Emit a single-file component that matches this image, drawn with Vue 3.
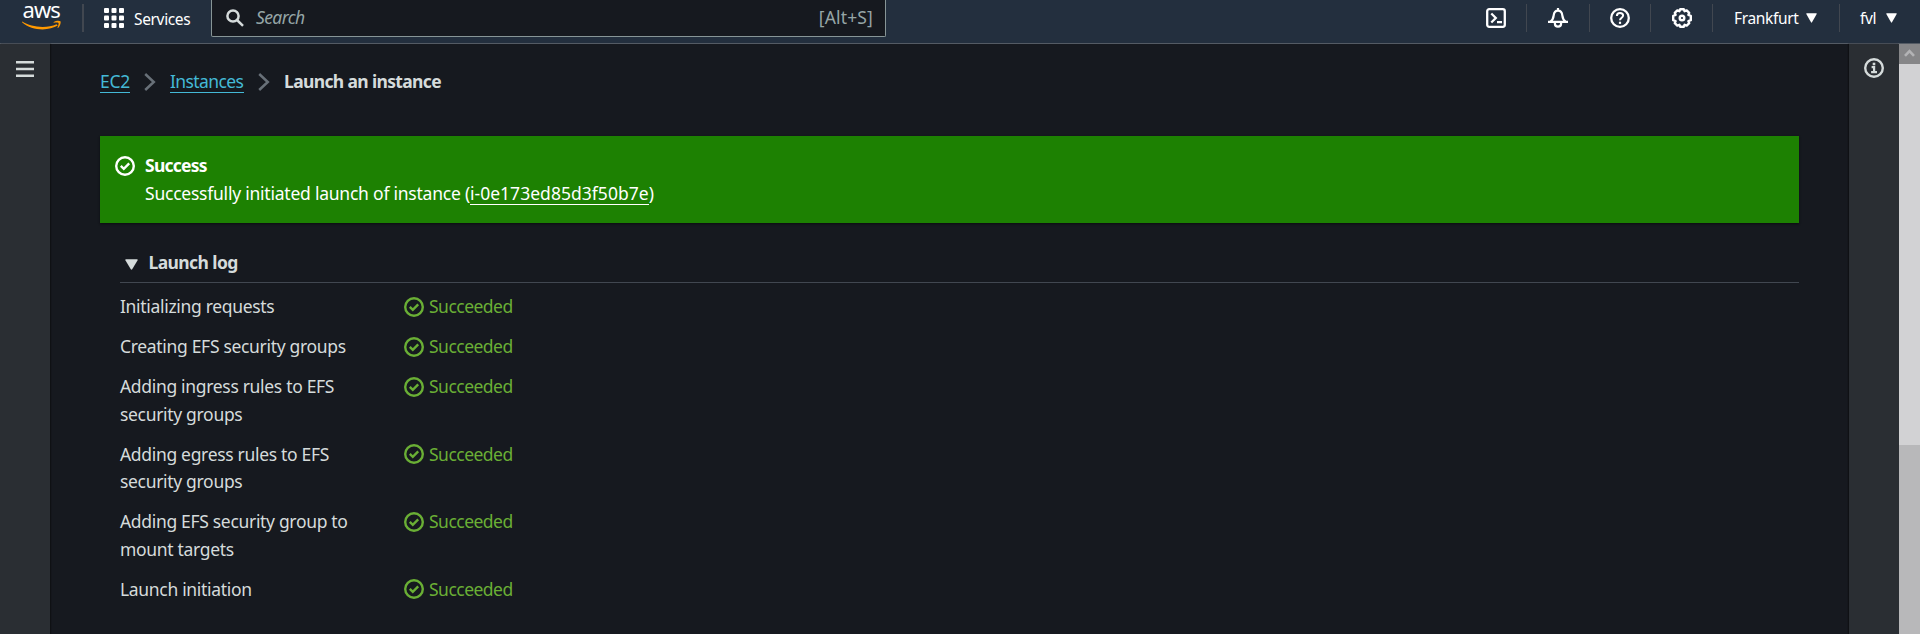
<script setup>
const tasks = [
  ['Initializing requests'],
  ['Creating EFS security groups'],
  ['Adding ingress rules to EFS', 'security groups'],
  ['Adding egress rules to EFS', 'security groups'],
  ['Adding EFS security group to', 'mount targets'],
  ['Launch initiation'],
]
const dots = [0, 1, 2, 3, 4, 5, 6, 7, 8]
</script>

<template>
  <div class="console">
    <header class="topbar">
      <div class="logo">
        <span class="logo-text">aws</span>
        <svg class="smile" width="40" height="11" viewBox="0 0 40 11">
          <path d="M.3 1.600C9 7.500 25 8.800 34.500 4.200l1.300 1.400C27 11 10 11.300 0 2.200z" fill="#f90" />
          <path d="M31.500 2.200c2.500-1.600 6-1.700 7-.9.600 1.200-.2 4.600-2.400 6.700l-.7-.3c.9-2 1.500-4 1.100-4.700-.6-.6-2.700-.5-4.800-.2z" fill="#f90" />
        </svg>
      </div>
      <i class="divider first"></i>
      <div class="services">
        <svg width="20" height="20" viewBox="0 0 20 20" fill="#fff">
          <rect v-for="d in dots" :key="d" :x="(d % 3) * 7.5" :y="Math.floor(d / 3) * 7.5" width="5" height="5" rx="1" />
        </svg>
        <span>Services</span>
      </div>
      <div class="search">
        <svg width="18" height="18" viewBox="0 0 18 18" fill="none" stroke="#d5dbdb" stroke-width="2.500">
          <circle cx="7" cy="7" r="5.600" /><path d="M11 11l6 5.800" />
        </svg>
        <em>Search</em>
        <span class="shortcut">[Alt+S]</span>
      </div>
      <nav class="tools">
        <span class="cell c1">
          <svg width="20" height="20" viewBox="0 0 20 20" fill="none" stroke="#fff" stroke-width="2.300">
            <rect x="1.200" y="1.200" width="17.600" height="17.600" rx="2" />
            <path d="M5.300 5.500l4.500 4.500-4.500 4.500M11 14.100h5" />
          </svg>
        </span>
        <span class="cell c2">
          <svg width="20" height="20" viewBox="0 0 20 20" fill="none" stroke="#fff" stroke-width="2.200">
            <path d="M10 0v2.500M2.200 13.800c2.400-1.800 3.200-3.600 3.500-6.500C6 4.300 7.500 2.600 10 2.600s4 1.700 4.300 4.700c.3 2.900 1.100 4.700 3.500 6.500M0 13.900h20" />
            <path d="M6.900 14v1.500c0 2 1.200 3.200 3.100 3.200s3.100-1.200 3.100-3.200V14" />
          </svg>
        </span>
        <span class="cell c3">
          <svg width="20" height="20" viewBox="0 0 20 20" fill="none" stroke="#fff" stroke-width="2.300">
            <circle cx="10" cy="10" r="8.800" />
            <path d="M6.900 8c0-2 1.300-3 3.100-3s3.100 1.100 3.100 2.600c0 2.200-3.100 2.200-3.100 4.700" stroke-width="2" />
            <path d="M10 13.700v2.200" stroke-width="2.200" />
          </svg>
        </span>
        <span class="cell c4">
          <svg width="20" height="20" viewBox="0 0 20 20" fill="none" stroke="#fff" stroke-width="2.400" stroke-linejoin="round">
            <path d="M8.200 1.200h3.600l.8 2 2.100-.8 2.500 2.500-.8 2 2.400.9v4.400l-2.400.9.800 2-2.500 2.500-2.100-.8-.8 2H8.200l-.8-2-2.100.8-2.500-2.500.8-2-2.400-.9V7.800l2.400-.9-.8-2 2.500-2.500 2.100.8z" />
            <circle cx="10" cy="10" r="2.300" />
          </svg>
        </span>
        <span class="cell c5">
          <span>Frankfurt</span>
          <svg width="11" height="10" viewBox="0 0 11 10"><path d="M.8.300h9.400q.8 0 .5.700L6 9.300q-.5.700-1 0L.3 1Q0 .300.800.300z" fill="#fff" /></svg>
        </span>
        <span class="cell c6">
          <span>fvl</span>
          <svg width="11" height="10" viewBox="0 0 11 10"><path d="M.8.300h9.400q.8 0 .5.700L6 9.300q-.5.700-1 0L.3 1Q0 .300.800.300z" fill="#fff" /></svg>
        </span>
      </nav>
    </header>

    <div class="body">
      <aside class="rail left">
        <svg width="18" height="16" viewBox="0 0 18 16" fill="#d5dbdb">
          <path d="M0 0h18v2.500H0zM0 6.700h18v2.500H0zM0 13.400h18v2.500H0z" />
        </svg>
      </aside>

      <main>
        <nav class="crumbs">
          <a class="link ec2">EC2</a>
          <svg width="12" height="18" viewBox="0 0 12 18"><path d="M1.200 1l8.600 8-8.600 8" fill="none" stroke="#687078" stroke-width="2.500" /></svg>
          <a class="link inst">Instances</a>
          <svg width="12" height="18" viewBox="0 0 12 18"><path d="M1.200 1l8.600 8-8.600 8" fill="none" stroke="#687078" stroke-width="2.500" /></svg>
          <b>Launch an instance</b>
        </nav>

        <section class="flash">
          <svg class="check" width="20" height="20" viewBox="0 0 20 20" fill="none" stroke="#fff" stroke-width="2.400">
            <circle cx="10" cy="10" r="8.800" /><path d="M5.800 9.800l3 3 5.400-5.400" />
          </svg>
          <div>
            <div class="flash-title">Success</div>
            <div class="flash-text">Successfully initiated launch of instance (<a>i-0e173ed85d3f50b7e</a>)</div>
          </div>
        </section>

        <section class="log">
          <h2>
            <svg width="13" height="11" viewBox="0 0 13 11"><path d="M.9.300h11.200q1 0 .5.900L7.200 10.200q-.7.900-1.400 0L.4 1.200Q-.1.300.900.300z" fill="#d5dbdb" /></svg>
            <span>Launch log</span>
          </h2>
          <ul>
            <li v-for="(t, i) in tasks" :key="i">
              <div class="name"><div v-for="line in t" :key="line">{{ line }}</div></div>
              <div class="status">
                <svg width="20" height="20" viewBox="0 0 20 20" fill="none" stroke="#6aaf35" stroke-width="2.400">
                  <circle cx="10" cy="10" r="8.800" /><path d="M5.800 9.800l3 3 5.400-5.400" />
                </svg>
                <span>Succeeded</span>
              </div>
            </li>
          </ul>
        </section>
      </main>

      <aside class="rail right">
        <svg width="20" height="20" viewBox="0 0 20 20" fill="none" stroke="#d5dbdb">
          <circle cx="10" cy="10" r="8.800" stroke-width="2.400" />
          <path d="M10 4.700v2.600" stroke-width="2.600" />
          <path d="M7.600 9.100h2.500v5M7.100 14.200h5.900" stroke-width="2.200" />
        </svg>
      </aside>
      <div class="scrollbar">
        <div class="up"><svg width="11" height="8" viewBox="0 0 11 8"><path d="M1 6.800l4.500-4.700L10 6.800" fill="none" stroke="#b3b3b5" stroke-width="2.600" /></svg></div>
        <div class="thumb"></div>
      </div>
    </div>
  </div>
</template>

<style>
body { margin: 0; overflow: hidden; background: #16191f; }
</style>

<style scoped>
.console { width: 1920px; height: 634px; display: flex; flex-direction: column; overflow: hidden; background: #16191f; color: #d5dbdb; font-family: "Noto Sans", "Open Sans", sans-serif; font-size: 17.5px; line-height: 27.5px; letter-spacing: -0.6px; }
svg { display: block; flex: none; }
.topbar { box-sizing: border-box; height: 44px; flex: none; display: flex; background: #232f3e; border-bottom: 1px solid #545b64; color: #fff; font-size: 15.5px; letter-spacing: -0.35px; }
.logo { width: 82px; box-sizing: border-box; padding-left: 22px; }
.logo-text { display: block; height: 20px; line-height: 19px; font-size: 22px; letter-spacing: -0.9px; padding-left: 0.5px; }
.divider { width: 1px; height: 28px; margin-top: 4px; background: #414750; border-right: 1px solid #414750; }
.services { width: 127px; display: flex; align-items: flex-start; gap: 10px; padding-left: 20px; box-sizing: border-box; padding-top: 8px; }
.services span { line-height: 22px; }
.search { box-sizing: border-box; width: 675px; height: 37px; background: #16191f; border: 1px solid #879596; border-top: 0; border-radius: 0 0 2px 2px; display: flex; align-items: center; padding: 0 12px 0 14px; color: #95a5a6; font-size: 17.5px; letter-spacing: -0.6px; }
.search em { margin-left: 12px; }
.shortcut { margin-left: auto; letter-spacing: 0.15px; }
.tools { margin-left: auto; display: flex; height: 28px; margin-top: 4px; }
.cell { box-sizing: border-box; display: flex; align-items: center; border-left: 1px solid #414750; line-height: 28px; }
.cell svg { margin-top: -1px; }
.c1 { border: 0; width: 40px; }
.c2 { width: 63px; padding-left: 21px; }
.c3 { width: 61px; padding-left: 20px; }
.c4 { width: 62px; padding-left: 21px; }
.c5 { width: 127px; padding-left: 21px; }
.c5 span { width: 72px; }
.c6 { width: 81px; padding-left: 20px; }
.c6 span { width: 26px; }
.body { flex: 1; display: flex; min-height: 0; }
.rail { width: 50px; flex: none; background: #2a2e33; }
.left { box-shadow: 1px 0 1px #0f1114; }
.left svg { margin: 17px 0 0 16px; }
.right { box-shadow: -1px 0 1px #0f1114; }
.right svg { margin: 14px 0 0 15px; }
main { flex: 1; padding: 24px 50px 0; }
.crumbs { display: flex; align-items: center; height: 27px; }
.crumbs svg { margin: 0 14px; }
.link { box-sizing: border-box; color: #44b9d6; line-height: 23px; height: 23px; border-bottom: 1px solid #44b9d6; }
.ec2 { width: 30px; letter-spacing: -0.3px; }
.inst { width: 74px; }
.crumbs b { letter-spacing: -0.65px; }
.flash { box-sizing: border-box; height: 87px; margin-top: 41px; padding: 16px 15px; display: flex; gap: 10px; background: #1d8102; color: #fff; box-shadow: 0 1px 2px #0b0d10; }
.check { margin-top: 4px; }
.flash-title { letter-spacing: -0.75px; }
.flash-text { letter-spacing: -0.23px; }
.flash a { display: inline-block; line-height: 21px; border-bottom: 1px solid #fff; letter-spacing: 0.03px; }
.log { padding-left: 20px; margin-top: 26px; }
h2 { margin: 0; box-sizing: border-box; height: 34px; border-bottom: 1px solid #414750; font-size: 17.5px; display: flex; align-items: flex-start; }
h2 svg { margin: 10px 10.5px 0 5px; }
b, h2, .flash-title { font-weight: 700; }
ul { list-style: none; margin: 0; padding: 10px 0 0; }
li { display: flex; margin-bottom: 12.5px; }
.name { width: 284px; letter-spacing: -0.32px; }
.status { display: flex; align-items: center; height: 27.5px; gap: 5px; color: #6aaf35; letter-spacing: -0.52px; }
.scrollbar { width: 21px; background: #b8b8ba; }
.up { height: 20px; background: #868688; display: flex; align-items: center; justify-content: center; }
.up svg { margin-top: -2px; }
.thumb { height: 381px; background: #d2d2d4; }
</style>
